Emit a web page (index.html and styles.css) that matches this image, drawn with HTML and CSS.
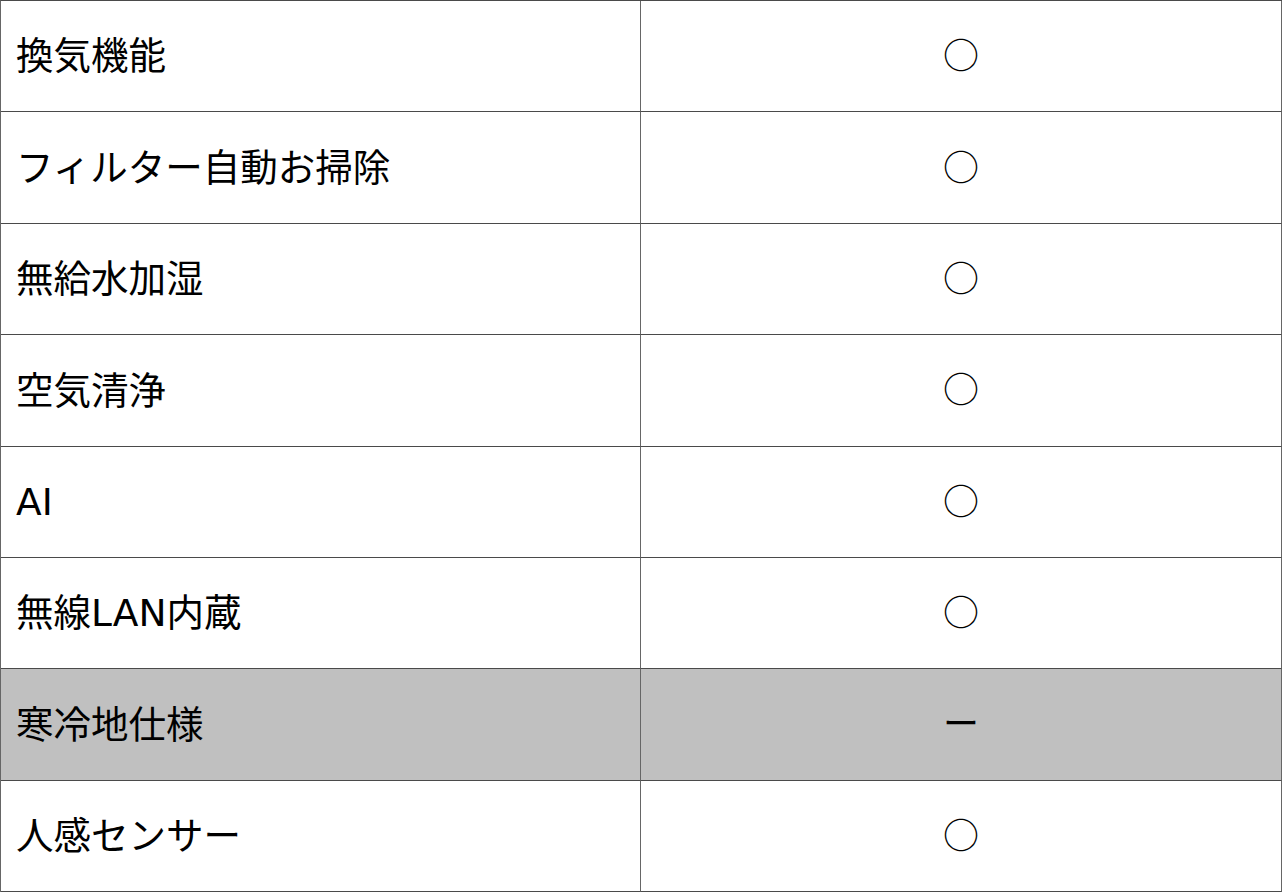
FILE: index.html
```html
<!DOCTYPE html>
<html lang="ja">
<head>
<meta charset="utf-8">
<link rel="stylesheet" href="styles.css">
</head>
<body>
<div class="spec">
  <div class="row"><div class="name">換気機能</div><div class="mark">○</div></div>
  <div class="row"><div class="name">フィルター自動お掃除</div><div class="mark">○</div></div>
  <div class="row"><div class="name">無給水加湿</div><div class="mark">○</div></div>
  <div class="row"><div class="name">空気清浄</div><div class="mark">○</div></div>
  <div class="row"><div class="name">AI</div><div class="mark">○</div></div>
  <div class="row"><div class="name">無線LAN内蔵</div><div class="mark">○</div></div>
  <div class="row off"><div class="name">寒冷地仕様</div><div class="mark">ー</div></div>
  <div class="row"><div class="name">人感センサー</div><div class="mark">○</div></div>
</div>
</body>
</html>
```
FILE: styles.css
```css
html, body {
  margin: 0;
  padding: 0;
  background: #ffffff;
}
body {
  font-family: "DejaVu Sans", "Noto Sans CJK JP", sans-serif;
  color: #000;
}
.spec {
  width: 1282px;
  height: 892px;
  box-sizing: border-box;
  border-top: 1px solid #4a4a4a;
  border-left: 1px solid #666;
  display: grid;
  grid-template-rows: repeat(8, 1fr);
}
.row {
  display: grid;
  grid-template-columns: 640px 1fr;
}
.row.off {
  background: #c0c0c0;
}
.name, .mark {
  display: flex;
  align-items: center;
  border-right: 1px solid #666;
  border-bottom: 1px solid #4a4a4a;
  font-size: 37.5px;
  line-height: 1;
}
.name {
  padding-left: 15px;
  padding-top: 2px;
}
.mark {
  justify-content: center;
  font-family: "Noto Sans CJK JP", sans-serif;
  font-size: 36px;
  padding-bottom: 6px;
}
```
